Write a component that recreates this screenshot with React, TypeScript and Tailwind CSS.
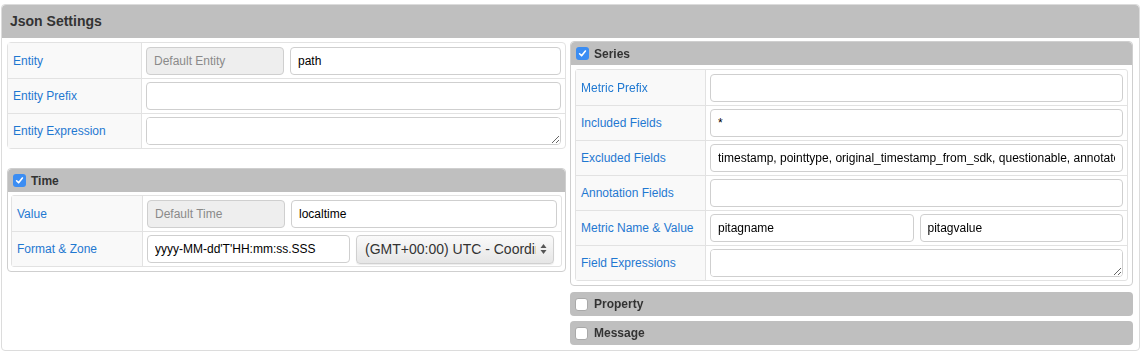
import React from 'react';

const font = { fontFamily: '"Liberation Sans", Arial, sans-serif' };

const Check: React.FC<{ checked?: boolean }> = ({ checked }) =>
  checked ? (
    <span className="inline-flex h-[13px] w-[13px] items-center justify-center rounded-[3px] bg-[#3b8df3]">
      <svg width="9" height="9" viewBox="0 0 9 9">
        <path d="M1.6 4.8 L3.6 6.8 L7.4 2" fill="none" stroke="#fff" strokeWidth="1.6" strokeLinecap="round" strokeLinejoin="round" />
      </svg>
    </span>
  ) : (
    <span className="inline-block h-[13px] w-[13px] rounded-[3px] border border-[#a9a9a9] bg-white" />
  );

const baseCls = 'h-[28px] min-w-0 rounded-[4px] border border-[#cfcfcf] px-[7px] text-[12px] outline-none';
const inputCls = `${baseCls} flex-1 bg-white text-black`;
const disabledCls = `${baseCls} w-[138px] shrink-0 bg-[#eeeeee] text-[#8a8a8a] placeholder:text-[#8a8a8a]`;
const areaCls = `${baseCls} block flex-1 resize-y bg-white py-[5px]`;

const Row: React.FC<{ label: string; labelW: number; first?: boolean; children: React.ReactNode }> = ({
  label,
  labelW,
  first,
  children,
}) => (
  <div className={`flex h-[35px] ${first ? '' : 'border-t border-[#e2e2e2]'}`}>
    <div
      className="flex shrink-0 items-center border-r border-[#e2e2e2] bg-[#f9f9f9] pl-[5px] text-[12px] text-[#1f78d1]"
      style={{ width: labelW }}
    >
      {label}
    </div>
    <div className="flex min-w-0 flex-1 items-center gap-[6px] px-[4px]">{children}</div>
  </div>
);

const SubHeader: React.FC<{ title: string; checked?: boolean }> = ({ title, checked }) => (
  <div className="flex h-[23px] items-center gap-[5px] rounded-t-[4px] bg-[#bfbfbf] pl-[5px] text-[12px] font-bold text-[#333]">
    <Check checked={checked} />
    {title}
  </div>
);

const Select: React.FC<{ value: string }> = ({ value }) => (
  <div className="flex h-[29px] w-[198px] shrink-0 items-center justify-between gap-[4px] rounded-[4px] border border-[#d0d0d0] bg-gradient-to-b from-[#fafafa] to-[#e6e6e6] pl-[8px] pr-[6px] text-[14px] text-[#333] shadow-[0_1px_1px_rgba(0,0,0,0.08)]">
    <span className="min-w-0 overflow-hidden whitespace-nowrap">{value}</span>
    <svg className="shrink-0" width="7" height="12" viewBox="0 0 7 12">
      <path d="M3.5 1 L6.5 5 H0.5 Z M3.5 11 L0.5 7 H6.5 Z" fill="#555" />
    </svg>
  </div>
);

export default function App() {
  return (
    <div className="bg-white px-[1px] pt-[4px]" style={font}>
      <div className="h-[347px] rounded-[4px] border border-[#dcdcdc]">
        <div className="flex h-[33px] items-center rounded-t-[4px] bg-[#bfbfbf] pl-[8px] text-[14px] font-bold text-[#333]">
          Json Settings
        </div>
        <div className="flex gap-[4px] px-[5px] pt-[4px]">
          <div className="flex w-[559px] shrink-0 flex-col gap-[19px]">
            <div className="rounded-[4px] border border-[#e2e2e2]">
              <Row label="Entity" labelW={134} first>
                <input className={disabledCls} placeholder="Default Entity" disabled />
                <input className={inputCls} defaultValue="path" />
              </Row>
              <Row label="Entity Prefix" labelW={134}>
                <input className={inputCls} />
              </Row>
              <Row label="Entity Expression" labelW={134}>
                <textarea className={areaCls} />
              </Row>
            </div>
            <div className="rounded-[4px] border border-[#cfcfcf]">
              <SubHeader title="Time" checked />
              <div className="p-[3px] pb-[4px]">
                <div className="rounded-[3px] border border-[#e2e2e2]">
                  <Row label="Value" labelW={131} first>
                    <input className={disabledCls} placeholder="Default Time" disabled />
                    <input className={inputCls} defaultValue="localtime" />
                  </Row>
                  <Row label="Format & Zone" labelW={131}>
                    <input className={`${inputCls} max-w-[203px]`} defaultValue="yyyy-MM-dd'T'HH:mm:ss.SSS" />
                    <Select value="(GMT+00:00) UTC - Coordinated Universal Time" />
                  </Row>
                </div>
              </div>
            </div>
          </div>
          <div className="-mt-[1px] flex w-[563px] flex-col gap-[5px]">
            <div className="rounded-[4px] border border-[#cfcfcf]">
              <SubHeader title="Series" checked />
              <div className="p-[4px]">
                <div className="rounded-[3px] border border-[#e2e2e2]">
                  <Row label="Metric Prefix" labelW={130} first>
                    <input className={inputCls} />
                  </Row>
                  <Row label="Included Fields" labelW={130}>
                    <input className={inputCls} defaultValue="*" />
                  </Row>
                  <Row label="Excluded Fields" labelW={130}>
                    <input
                      className={inputCls}
                      defaultValue="timestamp, pointtype, original_timestamp_from_sdk, questionable, annotated, substituted"
                    />
                  </Row>
                  <Row label="Annotation Fields" labelW={130}>
                    <input className={inputCls} />
                  </Row>
                  <Row label="Metric Name & Value" labelW={130}>
                    <input className={inputCls} defaultValue="pitagname" />
                    <input className={inputCls} defaultValue="pitagvalue" />
                  </Row>
                  <Row label="Field Expressions" labelW={130}>
                    <textarea className={areaCls} />
                  </Row>
                </div>
              </div>
            </div>
            <div className="mt-[1px] flex h-[24px] items-center gap-[6px] rounded-[4px] bg-[#bfbfbf] pl-[5px] text-[12px] font-bold text-[#333]">
              <Check />
              Property
            </div>
            <div className="flex h-[24px] items-center gap-[6px] rounded-[4px] bg-[#bfbfbf] pl-[5px] text-[12px] font-bold text-[#333]">
              <Check />
              Message
            </div>
          </div>
        </div>
      </div>
    </div>
  );
}
